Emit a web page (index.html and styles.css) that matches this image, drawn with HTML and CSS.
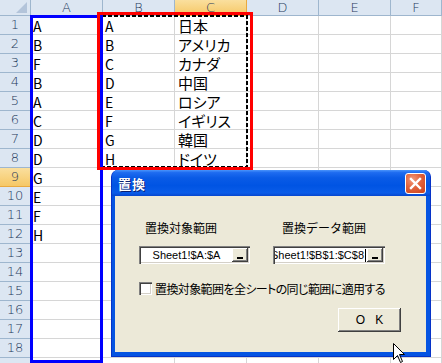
FILE: index.html
```html
<!DOCTYPE html>
<html lang="ja">
<head>
<meta charset="utf-8">
<title>置換</title>
<link rel="stylesheet" href="styles.css">
</head>
<body>
<div class="sheet">
  <div class="grid">
    <div class="corner"><span class="tri"></span></div>
    <div class="ch">A</div><div class="ch">B</div><div class="ch sel">C</div><div class="ch">D</div><div class="ch">E</div><div class="ch">F</div>

    <div class="rh">1</div><div class="c">A</div><div class="c">A</div><div class="c jp">日本</div><div class="c"></div><div class="c"></div><div class="c"></div>
    <div class="rh">2</div><div class="c">B</div><div class="c">B</div><div class="c jp">アメリカ</div><div class="c"></div><div class="c"></div><div class="c"></div>
    <div class="rh">3</div><div class="c">F</div><div class="c">C</div><div class="c jp">カナダ</div><div class="c"></div><div class="c"></div><div class="c"></div>
    <div class="rh">4</div><div class="c">B</div><div class="c">D</div><div class="c jp">中国</div><div class="c"></div><div class="c"></div><div class="c"></div>
    <div class="rh">5</div><div class="c">A</div><div class="c">E</div><div class="c jp">ロシア</div><div class="c"></div><div class="c"></div><div class="c"></div>
    <div class="rh">6</div><div class="c">C</div><div class="c">F</div><div class="c jp">イギリス</div><div class="c"></div><div class="c"></div><div class="c"></div>
    <div class="rh">7</div><div class="c">D</div><div class="c">G</div><div class="c jp">韓国</div><div class="c"></div><div class="c"></div><div class="c"></div>
    <div class="rh">8</div><div class="c">D</div><div class="c">H</div><div class="c jp">ドイツ</div><div class="c"></div><div class="c"></div><div class="c"></div>
    <div class="rh sel">9</div><div class="c">G</div><div class="c"></div><div class="c"></div><div class="c"></div><div class="c"></div><div class="c"></div>
    <div class="rh">10</div><div class="c">E</div><div class="c"></div><div class="c"></div><div class="c"></div><div class="c"></div><div class="c"></div>
    <div class="rh">11</div><div class="c">F</div><div class="c"></div><div class="c"></div><div class="c"></div><div class="c"></div><div class="c"></div>
    <div class="rh">12</div><div class="c">H</div><div class="c"></div><div class="c"></div><div class="c"></div><div class="c"></div><div class="c"></div>
    <div class="rh">13</div><div class="c"></div><div class="c"></div><div class="c"></div><div class="c"></div><div class="c"></div><div class="c"></div>
    <div class="rh">14</div><div class="c"></div><div class="c"></div><div class="c"></div><div class="c"></div><div class="c"></div><div class="c"></div>
    <div class="rh">15</div><div class="c"></div><div class="c"></div><div class="c"></div><div class="c"></div><div class="c"></div><div class="c"></div>
    <div class="rh">16</div><div class="c"></div><div class="c"></div><div class="c"></div><div class="c"></div><div class="c"></div><div class="c"></div>
    <div class="rh">17</div><div class="c"></div><div class="c"></div><div class="c"></div><div class="c"></div><div class="c"></div><div class="c"></div>
    <div class="rh">18</div><div class="c"></div><div class="c"></div><div class="c"></div><div class="c"></div><div class="c"></div><div class="c"></div>
    <div class="rh"></div><div class="c"></div><div class="c"></div><div class="c"></div><div class="c"></div><div class="c"></div><div class="c"></div>
  </div>

  <svg class="ants" width="147" height="153" viewBox="0 0 147 153">
    <rect x="1" y="1" width="145" height="151" fill="none" stroke="#000" stroke-width="2" stroke-dasharray="4 2"/>
  </svg>
  <div class="frame blue"></div>
  <div class="frame red"></div>

  <div class="dialog">
    <div class="titlebar">
      <span class="title">置換</span>
      <span class="close">
        <svg width="19" height="19" viewBox="0 0 19 19"><path d="M5 5 L14 14 M14 5 L5 14" stroke="#fff" stroke-width="2.4" stroke-linecap="square"/></svg>
      </span>
    </div>
    <div class="dbody">
      <div class="fields">
        <div class="lbl l1">置換対象範囲</div>
        <div class="lbl l2">置換データ範囲</div>
        <div class="ref">
          <div class="reftext center">Sheet1!$A:$A</div>
          <span class="refbtn"><i></i></span>
        </div>
        <div class="ref">
          <div class="reftext end"><span class="val">Sheet1!$B$1:$C$8</span><span class="caret"></span></div>
          <span class="refbtn"><i></i></span>
        </div>
      </div>
      <div class="chk"><span class="box13"></span><span class="chklbl">置換対象範囲を全シートの同じ範囲に適用する</span></div>
      <div class="actions"><button class="ok">O K</button></div>
    </div>
  </div>

  <svg class="cursor" width="14" height="22" viewBox="0 0 14 22">
    <path d="M1.5 1.5 L1.5 17.5 L5.5 13.5 L8.5 20.5 L10.5 19.5 L7.5 12.5 L12.5 12.5 Z" fill="#fff" stroke="#000" stroke-width="1" stroke-linejoin="miter"/>
  </svg>
</div>
</body>
</html>
```

FILE: styles.css
```css
html, body {
  margin: 0;
  padding: 0;
}
body {
  width: 442px;
  height: 363px;
  overflow: hidden;
  background: #fff;
  font-family: "Noto Sans CJK JP", "Liberation Sans", sans-serif;
}
.sheet {
  position: relative;
  width: 442px;
  height: 363px;
  overflow: hidden;
}
.grid {
  display: grid;
  grid-template-columns: 31px repeat(5, 72px) 1fr;
  grid-template-rows: 16px repeat(19, 19px);
}
.grid > div {
  box-sizing: border-box;
  border-right: 1px solid #D6D6D6;
  border-bottom: 1px solid #D6D6D6;
}
.grid > .corner,
.grid > .ch,
.grid > .rh {
  background: #DCE6F2;
  border-color: #9EB6CE;
  color: #1E395B;
  font-family: "DejaVu Sans", "Liberation Sans", sans-serif;
  font-weight: 300;
  font-size: 13px;
  line-height: 14px;
  display: flex;
  align-items: center;
  justify-content: center;
}
.grid > .sel {
  background: linear-gradient(#FADF9E, #F6C866);
  border-color: #E9A93F;
}
.grid > .corner {
  justify-content: flex-end;
  align-items: flex-end;
  padding: 0 3px 2px 0;
}
.tri {
  display: block;
  width: 11px;
  height: 11px;
  background: #B3C4DA;
  clip-path: polygon(100% 0, 100% 100%, 0 100%);
}
.c {
  display: flex;
  align-items: flex-end;
  padding: 0 0 1px 2px;
  font-size: 14px;
  line-height: 14px;
  color: #000;
  white-space: nowrap;
}
.jp {
  font-size: 15px;
  font-feature-settings: "palt";
  padding-left: 3px;
}

/* selection overlays */
.ants {
  position: absolute;
  left: 101px;
  top: 15px;
}
.frame {
  position: absolute;
  box-sizing: border-box;
  border: 3px solid;
}
.blue {
  left: 30px;
  top: 15px;
  width: 73px;
  height: 348px;
  border-color: #0000FF;
}
.red {
  left: 97px;
  top: 12px;
  width: 156px;
  height: 158px;
  border-color: #FF0000;
}

/* dialog */
.dialog {
  position: absolute;
  left: 111px;
  top: 170px;
  width: 320px;
  height: 187px;
  box-sizing: border-box;
  display: flex;
  flex-direction: column;
  background: #0554E2;
  border: 1px solid #0633C8;
  border-top: none;
  border-radius: 7px 7px 0 0;
  overflow: hidden;
}
.titlebar {
  height: 26px;
  flex: none;
  display: flex;
  align-items: center;
  justify-content: space-between;
  padding: 0 4px 0 6px;
  background: linear-gradient(#4A94FB 0%, #1E6CF0 10%, #0A5BE6 30%, #0054E3 60%, #0A5CE8 88%, #0646CE 100%);
}
.title {
  color: #fff;
  font-size: 13px;
  font-weight: bold;
  text-shadow: 1px 1px #0A1F70;
  letter-spacing: 1px;
}
.close {
  width: 21px;
  height: 21px;
  box-sizing: border-box;
  border: 1px solid #fff;
  border-radius: 3px;
  background: radial-gradient(circle at 35% 30%, #F29A7C 0%, #E2633C 45%, #C8401A 100%);
  display: flex;
  align-items: center;
  justify-content: center;
}
.close svg {
  display: block;
}
.dbody {
  flex: 1;
  margin: 0 4px 4px 3px;
  background: #ECE9D8;
  font-size: 12px;
  color: #000;
}
.fields {
  display: grid;
  grid-template-columns: 111px 112px;
  column-gap: 23px;
  row-gap: 12px;
  padding: 26px 0 0 24px;
}
.lbl {
  line-height: 12px;
  white-space: nowrap;
}
.l1 { padding-left: 6px; }
.l2 { padding-left: 9px; }
.ref {
  height: 18px;
  box-sizing: border-box;
  padding: 2px;
  background: #fff;
  display: flex;
  box-shadow: inset 1px 1px #808080, inset 2px 2px #404040, inset -1px -1px #fff, inset -2px -2px #D4D0C8;
}
.reftext {
  flex: 1;
  min-width: 0;
  overflow: hidden;
  display: flex;
  align-items: center;
  white-space: nowrap;
  font-family: "Liberation Sans", sans-serif;
  font-size: 11px;
  line-height: 14px;
}
.center { justify-content: center; }
.end { justify-content: flex-end; }
.val { flex: none; }
.caret {
  flex: none;
  width: 1px;
  height: 13px;
  background: #000;
  margin: 0 1px 0 1px;
}
.refbtn {
  flex: none;
  width: 16px;
  height: 14px;
  box-sizing: border-box;
  background: #ECE9D8;
  box-shadow: inset -1px -1px #404040, inset 1px 1px #fff, inset -2px -2px #808080;
  display: flex;
  align-items: flex-end;
  justify-content: center;
  padding-bottom: 3px;
}
.refbtn i {
  display: block;
  width: 6px;
  height: 2px;
  background: #000;
}
.chk {
  margin-top: 18px;
  padding-left: 24px;
  display: flex;
  align-items: center;
  gap: 3px;
  height: 13px;
}
.box13 {
  flex: none;
  width: 13px;
  height: 13px;
  box-sizing: border-box;
  background: #fff;
  box-shadow: inset 1px 1px #808080, inset 2px 2px #404040, inset -1px -1px #fff, inset -2px -2px #D4D0C8;
}
.chklbl {
  white-space: nowrap;
  font-feature-settings: "palt";
  letter-spacing: -0.6px;
  line-height: 13px;
}
.actions {
  margin-top: 13px;
  padding-right: 25px;
  display: flex;
  justify-content: flex-end;
}
.ok {
  width: 63px;
  height: 24px;
  border: none;
  padding: 0;
  background: #ECE9D8;
  box-shadow: inset -1px -1px #404040, inset 1px 1px #fff, inset -2px -2px #808080;
  font-family: "Liberation Sans", sans-serif;
  font-size: 12px;
  color: #000;
  word-spacing: 7px;
}
.cursor {
  position: absolute;
  left: 392px;
  top: 342px;
}
```
